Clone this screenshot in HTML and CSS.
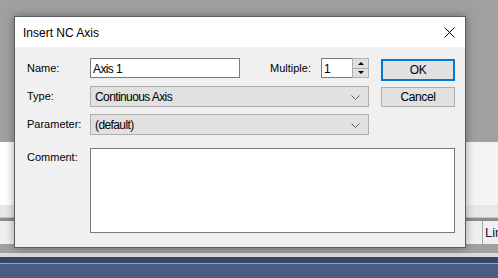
FILE: index.html
```html
<!DOCTYPE html>
<html lang="en">

<head>
    <meta charset="UTF-8">
    <title>Insert NC Axis</title>
    <link rel="stylesheet" href="styles.css">
</head>

<body>
    <!-- application behind the dialog -->
    <div class="desktop">
        <div class="band top-gray"></div>
        <div class="band panel"></div>
        <div class="band panel-foot"></div>
        <div class="band rule"></div>
        <div class="band tabs">
            <div class="tab">Lin</div>
        </div>
        <div class="band mid-gray"></div>
        <div class="band light-strip"></div>
        <div class="band taskbar-top"></div>
        <div class="band taskbar-line"></div>
        <div class="band taskbar"></div>
    </div>

    <!-- Modal dialog -->
    <div class="dialog">
        <div class="titlebar">
            <span class="title">Insert NC Axis</span>
            <svg class="close" width="11" height="11" viewBox="0 0 11 11">
                <path d="M0.5,0.5L10.5,10.5M10.5,0.5L0.5,10.5" stroke="#000" stroke-width="1" fill="none" />
            </svg>
        </div>
        <div class="dialog-body">
            <label class="lbl" for="axisName">Name:</label>
            <div class="field-row">
                <input id="axisName" class="textbox name-box" type="text" value="Axis 1">
                <label class="lbl multiple-lbl" for="multiple">Multiple:</label>
                <div class="spinner">
                    <input id="multiple" class="textbox spin-box" type="text" value="1">
                    <div class="spin-btns">
                        <div class="spin-btn"><span class="arrow-up"></span></div>
                        <div class="spin-btn spin-down"><span class="arrow-down"></span></div>
                    </div>
                </div>
            </div>
            <button class="btn btn-default">OK</button>

            <span class="lbl">Type:</span>
            <div class="combo">
                <span>Continuous Axis</span>
                <svg class="chevron" width="9" height="5" viewBox="0 0 9 5">
                    <path d="M0.5,0.5L4.5,4.5L8.5,0.5" stroke="#606060" stroke-width="1" fill="none" />
                </svg>
            </div>
            <button class="btn btn-cancel">Cancel</button>

            <span class="lbl">Parameter:</span>
            <div class="combo">
                <span>(default)</span>
                <svg class="chevron" width="9" height="5" viewBox="0 0 9 5">
                    <path d="M0.5,0.5L4.5,4.5L8.5,0.5" stroke="#606060" stroke-width="1" fill="none" />
                </svg>
            </div>

            <label class="lbl comment-lbl" for="comment">Comment:</label>
            <textarea id="comment" class="comment"></textarea>
        </div>
    </div>
</body>

</html>
```

FILE: styles.css
```css
body {
    margin: 0;
    overflow: hidden;
    font-family: "Liberation Sans", Arial, sans-serif;
    font-size: 11px;
    color: #000;
}

/* background app */
.desktop {
    display: flex;
    flex-direction: column;
    width: 498px;
    height: 278px;
}

.band {
    flex: none;
}

.top-gray {
    height: 142px;
    background: #a0a0a0;
}

.panel {
    height: 63px;
    background: linear-gradient(to right, #ffffff 0%, #fafafa 60%, #f4f4f4 100%);
}

.panel-foot {
    height: 12px;
    background: #e8e8e8;
}

.rule {
    height: 3px;
    border-top: 1px solid #c4c4c4;
    background: #8c8c8c;
}

.tabs {
    height: 23px;
    background: #f0f0f0;
    display: flex;
    justify-content: flex-end;
}

.tab {
    width: 13px;
    padding: 4px 0 0 2px;
    border-left: 1px solid #a8a8a8;
    font-size: 13px;
    color: #1c0c40;
    overflow: hidden;
    white-space: nowrap;
}

.mid-gray {
    height: 9px;
    background: #a0a0a0;
}

.light-strip {
    height: 4px;
    background: #dadada;
}

.taskbar-top {
    height: 6px;
    background: #34466a;
}

.taskbar-line {
    height: 1px;
    background: #93a2c0;
}

.taskbar {
    flex: 1;
    background: #4a5e85;
}

/* dialog window */
.dialog {
    position: absolute;
    left: 14px;
    top: 16px;
    width: 450px;
    border: 1px solid #5c5c5c;
    background: #f0f0f0;
    box-shadow: 0 0 9px rgba(0, 0, 0, 0.35);
}

.titlebar {
    height: 30px;
    background: #fff;
    display: flex;
    align-items: center;
    justify-content: space-between;
    padding: 0 10px 0 8px;
}

.title {
    font-size: 12px;
    padding-top: 1px;
}

.close {
    display: block;
}

.dialog-body {
    height: 189px;
    padding: 11px 0 0 12px;
    display: grid;
    grid-template-columns: 63px 279px 12px 74px;
    grid-template-rows: 28px 28px 34px 85px;
    align-items: start;
}

.lbl {
    grid-column: 1;
    line-height: 20px;
    white-space: nowrap;
}

.field-row {
    display: flex;
    align-items: center;
}

.textbox {
    box-sizing: border-box;
    height: 20px;
    margin: 0;
    padding: 1px 0 0 2px;
    border: 1px solid #7a7a7a;
    background: #fff;
    font-family: "Liberation Sans", sans-serif;
    font-size: 12px;
    letter-spacing: -0.6px;
    color: #000;
    outline: none;
}

.name-box {
    width: 150px;
}

.multiple-lbl {
    margin-left: auto;
    margin-right: 10px;
}

.spinner {
    display: flex;
    width: 48px;
    height: 20px;
}

.spin-box {
    width: 31px;
    border-right: none;
}

.spin-btns {
    box-sizing: border-box;
    width: 17px;
    height: 20px;
    border: 1px solid #adadad;
    display: flex;
    flex-direction: column;
    background: #e1e1e1;
}

.spin-btn {
    flex: 1;
    display: flex;
    align-items: center;
    justify-content: center;
}

.spin-down {
    border-top: 1px solid #adadad;
}

.arrow-up {
    border-left: 3px solid transparent;
    border-right: 3px solid transparent;
    border-bottom: 3px solid #000;
}

.arrow-down {
    border-left: 3px solid transparent;
    border-right: 3px solid transparent;
    border-top: 3px solid #000;
}

.combo {
    box-sizing: border-box;
    height: 21px;
    display: flex;
    align-items: center;
    justify-content: space-between;
    padding: 1px 8px 0 4px;
    border: 1px solid #adadad;
    background: #e1e1e1;
    font-size: 12px;
    letter-spacing: -0.6px;
}

.combo .chevron {
    display: block;
    margin-top: 1px;
}

.btn {
    grid-column: 4;
    box-sizing: border-box;
    width: 74px;
    height: 21px;
    margin: 1px 0 0 0;
    padding: 0;
    border: 1px solid #adadad;
    background: #e1e1e1;
    font-family: "Liberation Sans", sans-serif;
    font-size: 12px;
    letter-spacing: -0.4px;
    color: #000;
}

.btn-default {
    height: 22px;
    border: 2px solid #0078d7;
}

.btn-cancel {
    height: 20px;
}

.comment-lbl {
    line-height: 18px;
}

.comment {
    grid-column: 2 / 5;
    box-sizing: border-box;
    width: 365px;
    height: 85px;
    margin: 0;
    border: 1px solid #7a7a7a;
    background: #fff;
    resize: none;
    outline: none;
}
```
